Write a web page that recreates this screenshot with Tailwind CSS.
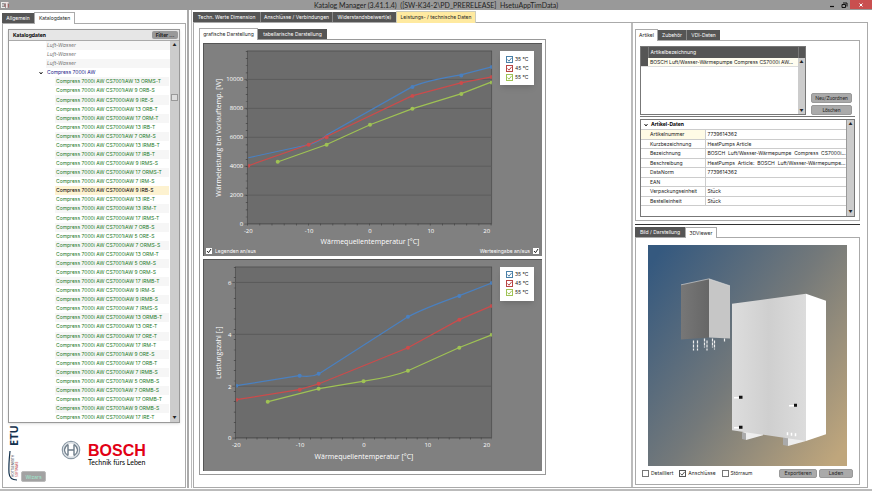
<!DOCTYPE html>
<html lang="de">
<head>
    <meta charset="UTF-8">
    <meta name="viewport" content="width=device-width, initial-scale=1.0">
    <title>Katalog Manager</title>
    <script src="https://cdn.jsdelivr.net/npm/@tailwindcss/browser@4"></script>
</head>
<body class="h-screen flex flex-col overflow-hidden bg-white font-['Inter','Open_Sans',sans-serif] text-[5px] leading-[9px] text-[#222]">
    <!-- Title bar -->
    <header class="h-[10px] shrink-0 flex items-center bg-[#999] text-[#222]">
        <div class="w-20 pl-px">
            <svg class="w-2 h-2" viewBox="0 0 8 8"><path d="M0 1h4v1H1v1.500h2v1H1V6h3v1H0z" fill="#eee"/><path d="M3.500 1h4v1.200H6.500V7H5V2.200H3.500z" fill="#f4e4e4"/><path d="M4 3v3M7.500 3v3.500" stroke="#a44" stroke-width=".6"/></svg>
        </div>
        <h1 class="flex-1 text-center font-['Lato','Noto_Sans',sans-serif] text-[7px] leading-[10px] whitespace-pre">Katalog Manager (3.41.1.4)  ([SW-K34-2\PD_PRERELEASE]  HsetuAppTimData)</h1>
        <div class="w-20 h-full flex justify-end">
            <button aria-label="Minimieren" class="w-3 flex items-center justify-center"><svg class="w-2 h-2" viewBox="0 0 8 8"><path d="M2 5.500h4" stroke="#111" stroke-width="1.200"/></svg></button>
            <button aria-label="Wiederherstellen" class="w-3 flex items-center justify-center"><svg class="w-2 h-2" viewBox="0 0 8 8"><path d="M2 3.500h3.500v3H2zM3 2h4v3.500" fill="none" stroke="#111"/></svg></button>
            <button aria-label="Schließen" class="w-[22px] h-[9px] bg-[#c94f4f] flex items-center justify-center"><svg class="w-2 h-2" viewBox="0 0 8 8"><path d="M2.500 2.500l3 3M5.500 2.500l-3 3" stroke="#fff"/></svg></button>
        </div>
    </header>

    <main class="flex-1 min-h-0 flex border-b-2 border-[#bbb] pb-px">
        <!-- Catalogue tree -->
        <aside class="w-[189px] shrink-0 flex flex-col border-r-2 border-[#aaa] pl-0.5 pr-px pt-0.5">
            <nav class="h-[11px] flex items-stretch">
                <button class="w-8 mt-px bg-[#555] text-white">Allgemein</button>
                <button class="w-[41px] relative z-10 -mb-px bg-white border border-b-0 border-[#aaa]">Katalogdaten</button>
            </nav>
            <div class="flex-1 min-h-0 flex flex-col border border-[#aaa] p-[5px] pb-0">
                <section class="flex-1 min-h-0 flex flex-col border border-[#999] shadow-sm">
                    <div class="h-[11px] shrink-0 flex items-center justify-between bg-[#e6e6e6] border-b border-[#aaa] pl-1 pr-px">
                        <h2 class="font-bold text-black">Katalogdaten</h2>
                        <button class="w-[26px] h-2 rounded-xs bg-[#999] leading-[7px] font-bold">Filter ...</button>
                    </div>
                    <div class="flex-1 min-h-0 flex">
                        <ul id="tree" class="flex-1 min-w-0 flex flex-col whitespace-nowrap"></ul>
                        <div class="w-[9px] shrink-0 flex flex-col items-center justify-between bg-[#ccc] text-[4px] leading-[8px]">
                            <span>▲</span>
                            <div class="flex-1 w-full pt-[45px]"><div class="w-[7px] h-[7px] mx-auto bg-[#ddd] border border-[#999]"></div></div>
                            <span>▼</span>
                        </div>
                    </div>
                </section>
                <!-- Logos -->
                <footer class="h-16 shrink-0 flex items-start">
                    <svg class="w-3 h-[60px] shrink-0 overflow-visible" viewBox="0 0 12 60" font-family="Noto Sans, sans-serif">
                        <text transform="translate(9.500 23) rotate(-90)" font-size="11" font-weight="bold" fill="#12304c">ETU</text>
                        <path d="M2 28Q.5 42 1 50Q1.500 57 9 57" fill="none" stroke="#12304c" stroke-width="1.200"/>
                        <text transform="translate(6 54) rotate(-90)" font-size="3" fill="#334">HOTTGENROTH</text>
                        <text transform="translate(9.500 54) rotate(-90)" font-size="3" fill="#b33">SOFTWARE</text>
                    </svg>
                    <button class="w-[25px] h-[11px] mt-12 ml-px rounded-xs bg-[#a2a2a2] border border-[#bbb] text-[#9fe8cf] leading-[8px]">Wizars</button>
                    <svg class="w-5 h-5 mt-[17px] ml-[15px] shrink-0" viewBox="0 0 20 20" fill="none">
                        <circle cx="10" cy="10" r="8.700" stroke="#8a98a4" stroke-width="1.200"/>
                        <circle cx="10" cy="10" r="7.300" stroke="#d5dbe0" stroke-width="1.400"/>
                        <path d="M7 4.500v11M13 4.500v11M7 10h6" stroke="#6d7c89" stroke-width="1.400"/>
                        <path d="M7 4.500Q3.500 7 3.500 10t3.500 5.500M13 4.500Q16.500 7 16.500 10T13 15.500" stroke="#6d7c89" stroke-width="1.100"/>
                    </svg>
                    <div class="mt-5 ml-[7px] whitespace-nowrap">
                        <div class="font-['Liberation_Sans',sans-serif] font-bold text-[16px] leading-[15px] text-[#e20015]">BOSCH</div>
                        <div class="font-['Lato',sans-serif] text-[7px] leading-[9px] text-black">Technik fürs Leben</div>
                    </div>
                </footer>
            </div>
        </aside>

        <!-- Workspace -->
        <div class="flex-1 min-w-0 flex flex-col ml-0.5 border-l border-[#bbb] pl-px pr-1 pt-px">
            <nav class="h-[11px] shrink-0 flex items-stretch text-white whitespace-nowrap">
                <button class="w-[67px] mt-px bg-[#555]">Techn. Werte Dimension</button>
                <button class="w-[72px] mt-px bg-[#555] border-l border-[#888]">Anschlüsse / Verbindungen</button>
                <button class="w-16 mt-px bg-[#555] border-l border-[#888]">Widerstandsbeiwert(e)</button>
                <button class="w-20 relative z-10 -mb-px bg-[#ffeaa0] text-[#222] border border-b-0 border-[#ccb]">Leistungs- / technische Daten</button>
            </nav>
            <div class="flex-1 min-h-0 grid grid-cols-[347fr_229fr] gap-x-[85px] border border-[#aaa] pl-[5px] pr-[7px]">
                <!-- Diagrams -->
                <section class="min-h-0 flex flex-col pt-[5px] pb-3">
                    <nav class="h-[11px] shrink-0 flex items-stretch whitespace-nowrap">
                        <button class="w-[59px] relative z-10 -mb-px bg-white border border-b-0 border-[#aaa]">grafische Darstellung</button>
                        <button class="w-[69px] mt-px bg-[#555] text-white">tabellarische Darstellung</button>
                    </nav>
                    <div class="flex-1 min-h-0 flex flex-col gap-[3px] border border-[#999] p-[3px]">
                        <div class="flex-1 min-h-0 relative bg-[#808080] shadow-[inset_1px_1px_#555]">
                            <svg class="w-full h-full" viewBox="0 0 339 213" fill="none" font-family="Open Sans, Noto Sans, sans-serif">
                                <rect x="44" y="8" width="245" height="173" fill="#6c6c6c" stroke="#4a4a4a" stroke-width=".7"/>
                                <path d="M41 36.500H289M41 65.500H289M41 94.500H289M41 123.500H289M41 152.500H289M41 181.500H289" stroke="#5c5c5c"/>
                                <path d="M43.500 8V181" stroke="#444" stroke-width="2" stroke-dasharray=".7 6.520"/>
                                <path d="M44 182H289" stroke="#444" stroke-width="2" stroke-dasharray=".7 11.500"/>
                                <g fill="#fff" font-size="6">
                                    <g text-anchor="end">
                                        <text x="40" y="38">10000</text><text x="40" y="67">8000</text><text x="40" y="96">6000</text><text x="40" y="125">4000</text><text x="40" y="154">2000</text><text x="40" y="183">0</text>
                                    </g>
                                    <g text-anchor="middle">
                                        <text x="45" y="190">-20</text><text x="106" y="190">-10</text><text x="167" y="190">0</text><text x="228" y="190">10</text><text x="284" y="190">20</text>
                                    </g>
                                </g>
                                <g fill="#fff" font-size="7" text-anchor="middle">
                                    <text x="167" y="201">Wärmequellentemperatur [°C]</text>
                                    <text transform="translate(18 95) rotate(-90)">Wärmeleistung bei Vorlauftemp. [W]</text>
                                </g>
                                <path d="M45 115L105 102Q117 99 124 92L209 44Q222 38 258 32L289 24" stroke="#4a80c0" stroke-width="1.200"/>
                                <path d="M45 123L105 102L123 94L209 53L258 40L289 34" stroke="#cc4b4b" stroke-width="1.200"/>
                                <path d="M75 119L123 102L167 82L209 66L258 51L289 39" stroke="#9fc254" stroke-width="1.200"/>
                                <g fill="#4a80c0"><circle cx="209.500" cy="44" r="2"/><circle cx="258.500" cy="32.500" r="2"/><path d="M289 22v4a2 2 0 010-4z"/></g>
                                <g fill="#cc4b4b"><path d="M45 121v4a2 2 0 000-4z"/><circle cx="105.500" cy="102" r="2"/><circle cx="123.500" cy="94.500" r="2"/><circle cx="209.500" cy="53" r="2"/><circle cx="258.500" cy="40" r="2"/><path d="M289 32v4a2 2 0 010-4z"/></g>
                                <g fill="#9fc254"><circle cx="74.500" cy="119" r="2"/><circle cx="123.500" cy="102" r="2"/><circle cx="167" cy="82" r="2"/><circle cx="209.500" cy="66" r="2"/><circle cx="258.500" cy="51" r="2"/><path d="M289 37.500v4a2 2 0 010-4z"/></g>
                            </svg>
                            <div class="legend absolute top-2 right-2 w-[34px] h-[34px] bg-white shadow-md flex flex-col justify-center pl-1.5"></div>
                            <label class="absolute left-[3px] bottom-px flex items-center gap-[3px] text-white leading-[7px]">
                                <span class="relative w-1.5 h-1.5"><input type="checkbox" checked class="peer block appearance-none size-1.5 bg-white"><svg class="hidden peer-checked:block absolute inset-0 pointer-events-none" viewBox="0 0 6 6"><path d="M1 3l1.500 1.700L5 1" fill="none" stroke="#222"/></svg></span>
                                Legenden an/aus
                            </label>
                            <label class="absolute right-[3px] bottom-px flex items-center gap-[3px] text-white leading-[7px]">
                                Werteeingabe an/aus
                                <span class="relative w-1.5 h-1.5"><input type="checkbox" checked class="peer block appearance-none size-1.5 bg-white"><svg class="hidden peer-checked:block absolute inset-0 pointer-events-none" viewBox="0 0 6 6"><path d="M1 3l1.500 1.700L5 1" fill="none" stroke="#222"/></svg></span>
                            </label>
                        </div>
                        <div class="flex-1 min-h-0 relative bg-[#808080] shadow-[inset_1px_1px_#555]">
                            <svg class="w-full h-full" viewBox="0 0 339 213" fill="none" font-family="Open Sans, Noto Sans, sans-serif">
                                <rect x="32" y="8" width="257" height="171" fill="#6c6c6c" stroke="#4a4a4a" stroke-width=".7"/>
                                <path d="M29 23.500H289M29 75.500H289M29 127.500H289M29 179.500H289" stroke="#5a5a5a"/>
                                <path d="M31.500 8V179" stroke="#444" stroke-width="2" stroke-dasharray=".7 9.660"/>
                                <path d="M32 180H289" stroke="#444" stroke-width="2" stroke-dasharray=".7 10"/>
                                <g fill="#fff" font-size="6">
                                    <g text-anchor="end">
                                        <text x="28" y="26">6</text><text x="28" y="78">4</text><text x="28" y="130">2</text><text x="28" y="181">0</text>
                                    </g>
                                    <g text-anchor="middle">
                                        <text x="33" y="188">-20</text><text x="97" y="188">-10</text><text x="161" y="188">0</text><text x="225" y="188">10</text><text x="284" y="188">20</text>
                                    </g>
                                </g>
                                <g fill="#fff" font-size="7" text-anchor="middle">
                                    <text x="161" y="200">Wärmequellentemperatur [°C]</text>
                                    <text transform="translate(18 94) rotate(-90)">Leistungszahl [-]</text>
                                </g>
                                <path d="M33 127L96 117Q108 119 116 115L205 58Q220 50 256 37L289 24" stroke="#4a80c0" stroke-width="1.200"/>
                                <path d="M33 141L96 131L116 125L205 89L256 61L289 47" stroke="#cc4b4b" stroke-width="1.200"/>
                                <path d="M65 143L116 130L161 122.500Q190 118 205 112L256 89L289 76" stroke="#9fc254" stroke-width="1.200"/>
                                <g fill="#4a80c0"><path d="M33 125v4a2 2 0 000-4z"/><circle cx="96.500" cy="117" r="2"/><circle cx="115.500" cy="115" r="2"/><circle cx="205" cy="58" r="2"/><circle cx="256.500" cy="37" r="2"/><path d="M289 22v4a2 2 0 010-4z"/></g>
                                <g fill="#cc4b4b"><path d="M33 139v4a2 2 0 000-4z"/><circle cx="96.500" cy="131" r="2"/><circle cx="115.500" cy="125" r="2"/><circle cx="205" cy="89" r="2"/><circle cx="256.500" cy="61" r="2"/><path d="M289 45v4a2 2 0 010-4z"/></g>
                                <g fill="#9fc254"><circle cx="64.500" cy="143" r="2"/><circle cx="115.500" cy="130" r="2"/><circle cx="160.500" cy="122.500" r="2"/><circle cx="205" cy="112" r="2"/><circle cx="256.500" cy="89" r="2"/><path d="M289 74v4a2 2 0 010-4z"/></g>
                            </svg>
                            <div class="legend absolute top-2 right-2 w-[34px] h-[34px] bg-white shadow-md flex flex-col justify-center pl-1.5"></div>
                        </div>
                    </div>
                </section>

                <!-- Article and preview -->
                <section class="min-h-0 flex flex-col pt-[5px] pb-0.5 border-l-2 border-[#bbb] pl-0.5">
                    <div class="flex flex-col pt-px pb-[3px] border-b border-[#333] mb-0.5">
                        <nav class="h-[11px] flex items-stretch">
                            <button class="w-[23px] relative z-10 -mb-px bg-white border border-b-0 border-[#aaa]">Artikel</button>
                            <button class="w-7 mt-px bg-[#555] text-white">Zubehör</button>
                            <button class="w-[34px] mt-px bg-[#555] text-white border-l border-[#888]">VDI-Daten</button>
                        </nav>
                        <div class="flex flex-col gap-0.5 border border-[#aaa] p-1 pt-[5px] pb-[3px]">
                            <div class="flex gap-[5px] pb-px border-b border-[#777]">
                                <div class="w-[166px] h-[69px] flex flex-col border border-[#777]">
                                    <table class="w-full table-fixed border-collapse">
                                        <thead>
                                            <tr class="bg-[#555] text-white">
                                                <th class="w-[7px] h-[11px] border-r border-[#777]"></th>
                                                <th class="text-left font-normal pl-0.5">Artikelbezeichnung</th>
                                                <th class="w-[7px] border-l border-[#777]"></th>
                                            </tr>
                                        </thead>
                                    </table>
                                    <div class="flex-1 flex">
                                        <div class="flex-1 min-w-0">
                                            <div class="h-[9px] flex bg-[#fffdf0] border-b border-[#ddd]">
                                                <span class="w-[7px] shrink-0 bg-[#555]"></span>
                                                <span class="whitespace-nowrap pl-0.5 leading-[8px]">BOSCH Luft/Wasser-Wärmepumpe Compress CS7000i AW...</span>
                                            </div>
                                        </div>
                                        <div class="w-[7px] shrink-0 flex flex-col items-center justify-between bg-[#ccc] text-[4px] leading-[7px]"><span>▲</span><span>▼</span></div>
                                    </div>
                                </div>
                                <div class="flex flex-col justify-end gap-0.5 font-['Lato',sans-serif]">
                                    <button class="w-[41px] h-[10px] rounded-xs bg-[#aaa] border border-[#999] leading-[7px]">Neu/Zuordnen</button>
                                    <button class="w-[41px] h-[10px] rounded-xs bg-[#aaa] border border-[#999] leading-[7px]">Löschen</button>
                                </div>
                            </div>
                            <div class="h-[98px] flex border border-[#777]">
                                <div class="flex-1 min-w-0">
                                    <h3 class="h-[9px] flex items-center gap-[3px] pl-[3px] font-bold text-black">
                                        <svg class="w-1 h-1" viewBox="0 0 4 4"><path d="M.5 1L2 3L3.500 1" fill="none" stroke="#222"/></svg>
                                        Artikel-Daten
                                    </h3>
                                    <table class="w-full h-[77px] table-fixed border-collapse">
                                        <tbody id="articleData"></tbody>
                                    </table>
                                </div>
                                <div class="w-2 shrink-0 flex flex-col items-center justify-between bg-[#ccc] border-l border-[#999] text-[4px] leading-[8px]"><span>▲</span><span>▼</span></div>
                            </div>
                        </div>
                    </div>
                    <nav class="h-[10px] shrink-0 flex items-stretch whitespace-nowrap">
                        <button class="w-[50px] bg-[#555] text-white">Bild / Darstellung</button>
                        <button class="w-8 relative z-10 -mb-px bg-white border border-b-0 border-[#aaa]">3DViewer</button>
                    </nav>
                    <div class="flex-1 min-h-0 flex flex-col border border-[#aaa] pt-[7px] pb-1.5">
                        <svg class="flex-1 min-h-0 mx-3" viewBox="0 0 199 222" preserveAspectRatio="none">
                            <defs>
                                <linearGradient id="sky" x1="0" y1=".1" x2="1" y2=".9">
                                    <stop offset="0" stop-color="#35597f"/><stop offset=".5" stop-color="#74797a"/><stop offset="1" stop-color="#bfa67c"/>
                                </linearGradient>
                                <linearGradient id="side"><stop offset="0" stop-color="#777"/><stop offset="1" stop-color="#666"/></linearGradient>
                                <linearGradient id="front"><stop offset="0" stop-color="#ddd"/><stop offset=".5" stop-color="#cfcfcf"/><stop offset="1" stop-color="#dcdcdc"/></linearGradient>
                            </defs>
                            <rect width="199" height="222" fill="url(#sky)"/>
                            <path d="M33 40L61 34V93L33 95z" fill="url(#side)"/>
                            <path d="M61 34L82 41V94L61 93z" fill="#c6c6c6"/>
                            <path d="M33 40L61 34L82 41" fill="none" stroke="#ddd" stroke-width=".6"/>
                            <path d="M45.500 96v10M49.500 96v10M56.500 94v9M59 96v10M64.500 94v9M66.500 96v9M76.500 94v3" stroke="#eee" stroke-width="1.200" stroke-dasharray="3 1"/>
                            <path d="M94 188L98 190V196L115 191V187z" fill="#eee"/><path d="M94 188L98 189V196L94 195z" fill="#aaa"/>
                            <path d="M135 192L140 194V202L158 197V190z" fill="#eee"/><path d="M135 193L140 194V202L135 201z" fill="#aaa"/>
                            <path d="M84 59L158 49V197L84 186z" fill="url(#front)"/>
                            <path d="M158 49L178 56V190L158 197z" fill="#fff"/>
                            <path d="M86 153.500h5M86 183.500h5M141 161.500h5" stroke="#fff" stroke-width="1.500"/>
                            <path d="M91 151.500h3.500v3H91zM91 181.500h3.500v3H91zM146 159.500h3v3h-3z" fill="#111"/>
                            <path d="M139.500 188v3M143.500 188.500v3M147.500 189v3" stroke="#fff" stroke-width="1.500"/>
                        </svg>
                        <div class="h-3 shrink-0 flex items-end pl-1.5 pr-1.5">
                            <div id="viewOptions" class="flex-1 flex gap-1.5"></div>
                            <div class="flex gap-0.5">
                                <button class="w-[38px] h-[9px] rounded-xs bg-[#aaa] border border-[#999] leading-[7px]">Exportieren</button>
                                <button class="w-[34px] h-[9px] rounded-xs bg-[#aaa] border border-[#999] leading-[7px]">Laden</button>
                            </div>
                        </div>
                    </div>
                </section>
            </div>
        </div>
    </main>

    <script>
        const models = [
            '1iAW 13 ORMS-T', '1iAW 9 ORB-S', '0iAW 9 IRE-S', '0iAW 13 ORB-T', '0iAW 17 ORM-T', '0iAW 13 IRB-T',
            '1iAW 7 ORM-S', '0iAW 13 IRMB-T', '0iAW 17 IRB-T', '0iAW 9 IRMS-S', '0iAW 17 ORMS-T', '0iAW 7 IRM-S',
            '0iAW 9 IRB-S', '0iAW 13 IRE-T', '0iAW 13 IRM-T', '0iAW 17 IRMS-T', '1iAW 7 ORB-S', '1iAW 5 ORE-S',
            '0iAW 7 ORMS-S', '0iAW 13 ORM-T', '1iAW 5 ORM-S', '1iAW 9 ORM-S', '0iAW 17 IRMB-T', '0iAW 9 IRM-S',
            '0iAW 9 IRMB-S', '0iAW 7 IRMS-S', '0iAW 13 ORMB-T', '0iAW 13 ORE-T', '0iAW 17 ORE-T', '0iAW 17 IRM-T',
            '1iAW 9 ORE-S', '0iAW 17 ORB-T', '0iAW 7 IRMB-S', '1iAW 5 ORMB-S', '1iAW 7 ORMB-S', '0iAW 17 ORMB-T',
            '1iAW 9 ORMB-S', '0iAW 17 IRE-T'
        ];
        const selected = 12;

        let rows = '';
        for (let i = 0; i < 3; i++) {
            rows += `<li class="flex-1 min-h-0 flex items-center ml-[37px] pl-px odd:bg-[#f6f6f6] italic text-[#777]">Luft-Wasser</li>`;
        }
        rows += `<li class="flex-1 min-h-0 flex items-center pl-[30px] gap-1 text-[#22228a]">
            <svg class="w-1 h-1" viewBox="0 0 4 4"><path d="M.5 1L2 3L3.500 1" fill="none" stroke="#222"/></svg>Compress 7000i AW</li>`;
        models.forEach((model, i) => {
            const look = i === selected ? 'bg-[#fdf2d0] text-black' : 'odd:bg-[#f6f6f6] text-[#1c7a28]';
            rows += `<li class="flex-1 min-h-0 flex items-center ml-[46px] mr-px pl-px ${look}">Compress 7000i AW CS700${model}</li>`;
        });
        document.getElementById('tree').innerHTML = rows;

        // check box with a coloured frame and tick
        function checkBox(label, checked, color) {
            return `<label class="flex items-center gap-0.5 leading-[9px] whitespace-nowrap">
                <span class="relative w-[7px] h-[7px] ${color}"><input type="checkbox" ${checked ? 'checked' : ''} class="peer block appearance-none size-[7px] border border-current bg-white"><svg class="hidden peer-checked:block absolute inset-0 pointer-events-none" viewBox="0 0 7 7"><path d="M1.500 3.500L3 5.200L5.700 1.800" fill="none" stroke="currentColor"/></svg></span>
                ${label}
            </label>`;
        }

        document.querySelectorAll('.legend').forEach(legend => {
            legend.innerHTML = checkBox('35 °C', true, 'text-[#4a80a8]') + checkBox('45 °C', true, 'text-[#b84444]') + checkBox('55 °C', true, 'text-[#9fc254]');
        });
        document.getElementById('viewOptions').innerHTML =
            checkBox('Detailliert', false, 'text-[#777]') + checkBox('Anschlüsse', true, 'text-[#555]') + checkBox('Störraum', false, 'text-[#777]');

        const article = [
            ['Artikelnummer', '7739614362'],
            ['Kurzbezeichnung', 'HeatPumps Article'],
            ['Bezeichnung', 'BOSCH  Luft/Wasser-Wärmepumpe  Compress  CS7000i...'],
            ['Beschreibung', 'HeatPumps  Article:  BOSCH  Luft/Wasser-Wärmepumpe...'],
            ['DataNorm', '7739614362'],
            ['EAN', ''],
            ['Verpackungseinheit', 'Stück'],
            ['Bestelleinheit', 'Stück']
        ];
        document.getElementById('articleData').innerHTML = article.map(([name, value], i) => `
            <tr>
                <th class="w-16 border border-l-0 border-[#ccc] pl-[9px] text-left font-normal leading-[8px] whitespace-nowrap ${i === 0 ? 'bg-[#fffbe6]' : ''}">${name}</th>
                <td class="border border-r-0 border-[#ccc] pl-0.5 leading-[8px] whitespace-pre">${value}</td>
            </tr>`).join('');
    </script>
</body>
</html>
